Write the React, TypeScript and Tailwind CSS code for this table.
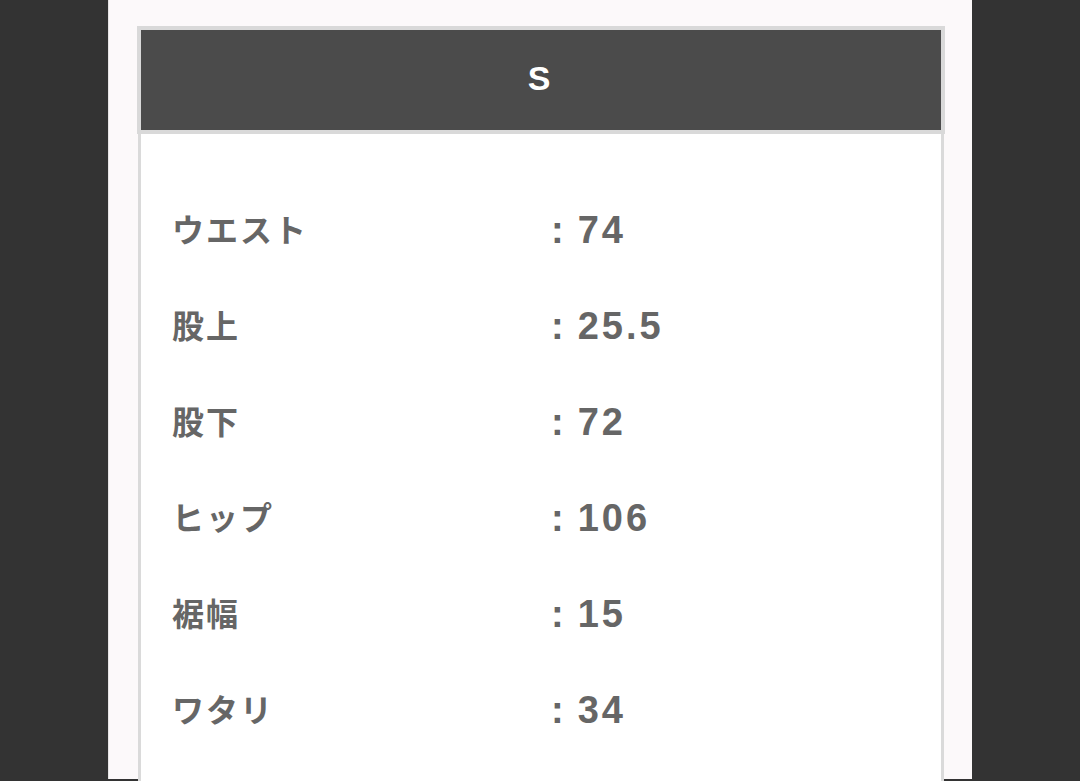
const rows = [
  { label: 'ウエスト', value: '74' },
  { label: '股上', value: '25.5' },
  { label: '股下', value: '72' },
  { label: 'ヒップ', value: '106' },
  { label: '裾幅', value: '15' },
  { label: 'ワタリ', value: '34' },
]

export default function App() {
  return (
    <div
      className="w-[1080px] h-[781px] bg-[#333333] flex justify-center overflow-hidden"
      style={{ fontFamily: '"Liberation Sans", "Noto Sans CJK JP", sans-serif' }}
    >
      <div className="w-[864px] h-[779px] bg-[#fcf9fa] pt-[26px] pl-[28px] border-l border-[#e6e4e5]">
        {/* size header */}
        <div className="w-[808px] h-[108px] border-4 border-[#d9d9d9] bg-[#4b4b4b] flex items-center justify-center">
          <span className="text-white text-[34px] font-bold leading-none -ml-[4px] -mt-[4px]">S</span>
        </div>

        {/* measurements */}
        <div className="ml-px w-[806px] h-[700px] bg-white border-x-[3px] border-[#dadada] pt-[48px]">
          {rows.map((row) => (
            <div key={row.label} className="h-[96px] flex items-center text-[#666666] font-bold leading-none">
              <div className="w-[410px] pl-[31px] text-[32px] tracking-[2px] mt-[2px]">{row.label}</div>
              <div className="flex items-center text-[38px] tracking-[3px]">
                <span className="mr-[11px]">:</span>
                <span>{row.value}</span>
              </div>
            </div>
          ))}
        </div>
      </div>
    </div>
  )
}
